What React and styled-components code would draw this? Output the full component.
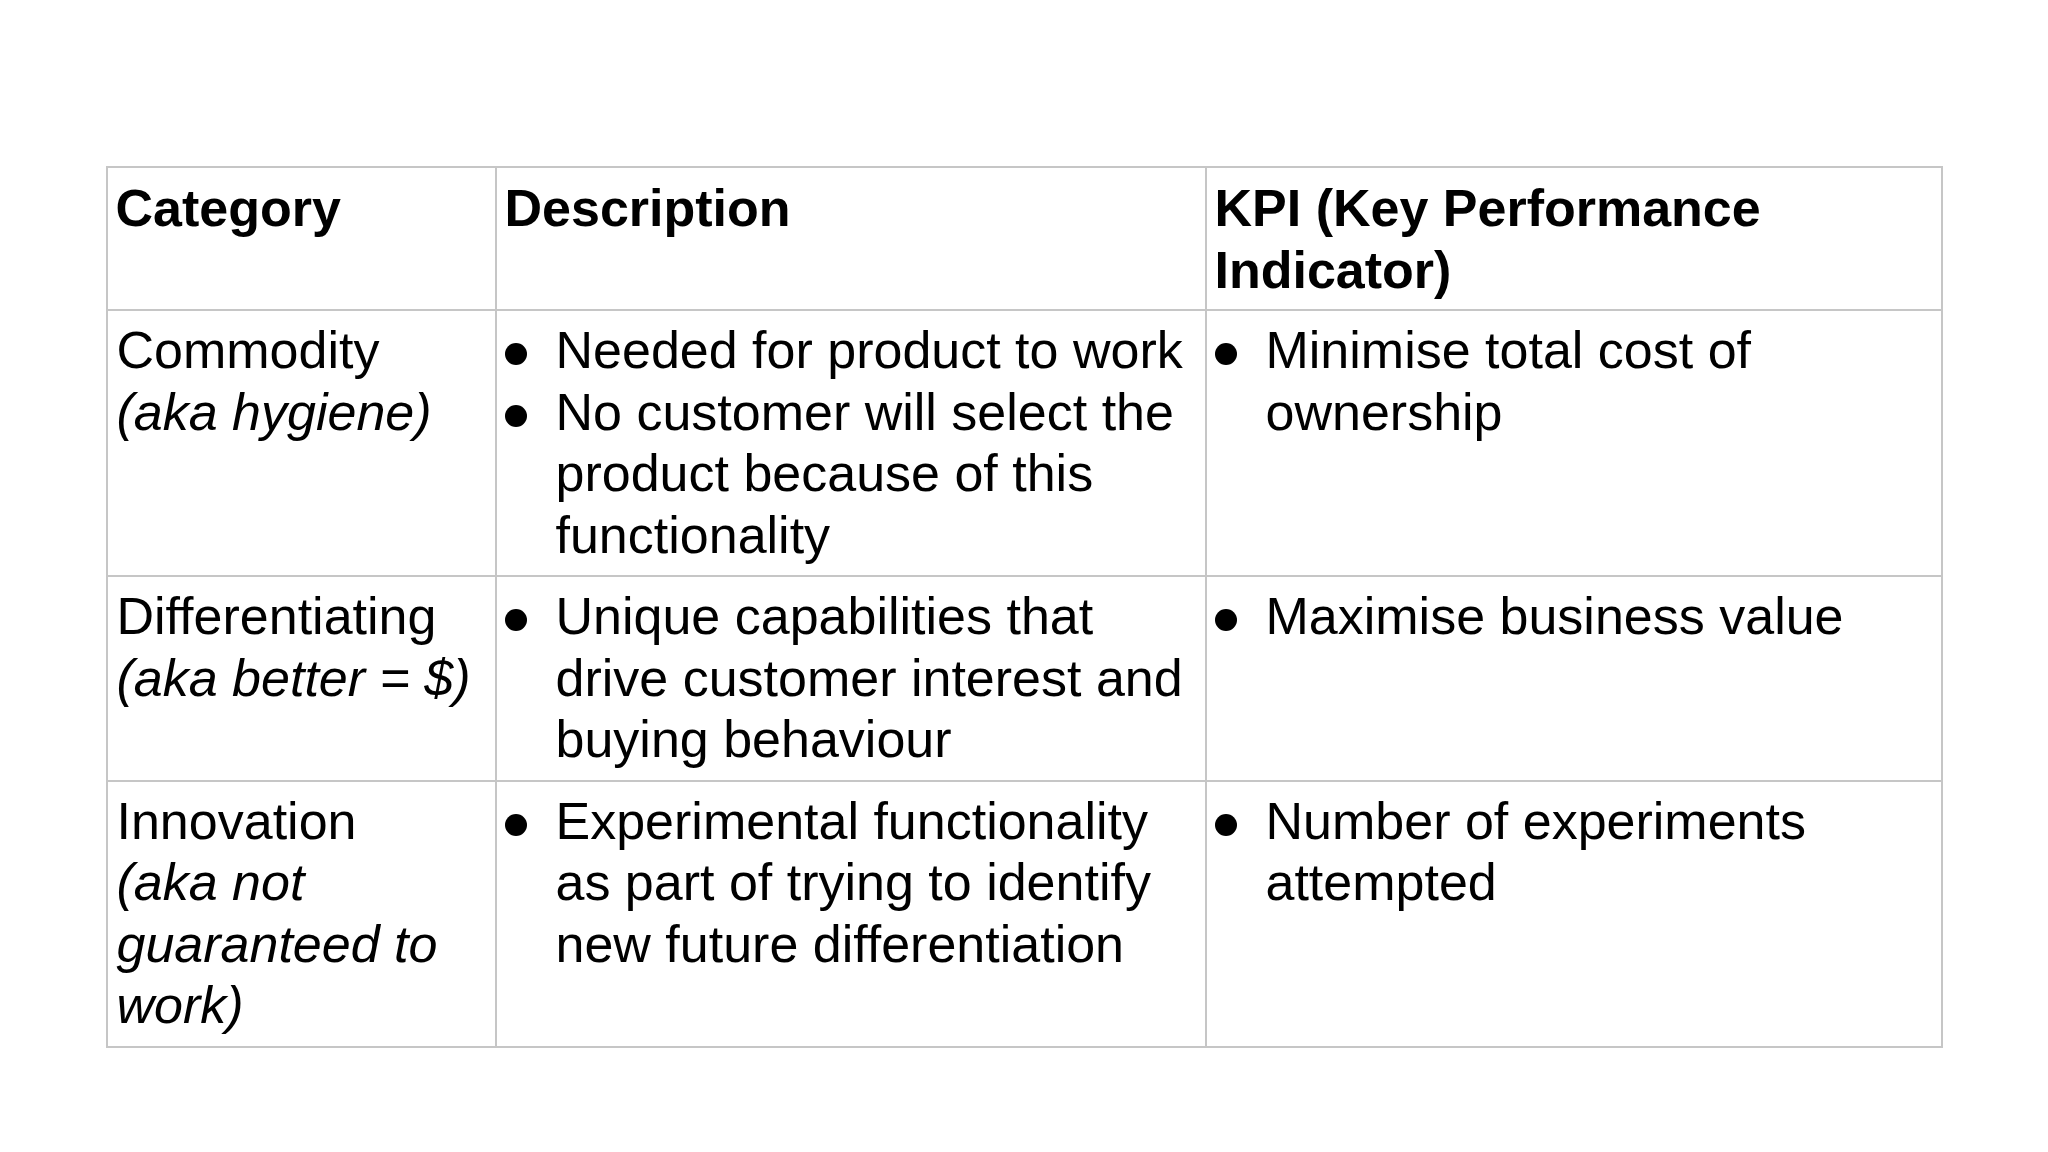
import React from "react";
import styled, { createGlobalStyle } from "styled-components";

const GlobalStyle = createGlobalStyle`
  html, body {
    margin: 0;
    padding: 0;
    background: #ffffff;
  }
  body {
    font-family: "Liberation Sans", Arial, Helvetica, sans-serif;
    color: #000000;
  }
`;

const rows = [
  {
    name: "Commodity",
    aka: "(aka hygiene)",
    description: [
      "Needed for product to work",
      "No customer will select the product because of this functionality",
    ],
    kpi: ["Minimise total cost of ownership"],
  },
  {
    name: "Differentiating",
    aka: "(aka better = $)",
    description: [
      "Unique capabilities that drive customer interest and buying behaviour",
    ],
    kpi: ["Maximise business value"],
  },
  {
    name: "Innovation",
    aka: "(aka not guaranteed to work)",
    description: [
      "Experimental functionality as part of trying to identify new future differentiation",
    ],
    kpi: ["Number of experiments attempted"],
  },
];

const App = () => {
  return (
    <>
      <GlobalStyle />
      <Slide>
        <Table>
          <colgroup>
            <col style={{ width: 389 }} />
            <col style={{ width: 710 }} />
            <col style={{ width: 736 }} />
          </colgroup>
          <thead>
            <tr>
              <HeadCell>Category</HeadCell>
              <HeadCell>Description</HeadCell>
              <HeadCell>KPI (Key Performance Indicator)</HeadCell>
            </tr>
          </thead>
          <tbody>
            {rows.map((row) => (
              <tr key={row.name}>
                <Cell>
                  <Name>{row.name}</Name>
                  <Aka>{row.aka}</Aka>
                </Cell>
                <Cell>
                  <BulletList>
                    {row.description.map((item) => (
                      <BulletItem key={item}>
                        <Marker />
                        <span>{item}</span>
                      </BulletItem>
                    ))}
                  </BulletList>
                </Cell>
                <Cell>
                  <BulletList>
                    {row.kpi.map((item) => (
                      <BulletItem key={item}>
                        <Marker />
                        <span>{item}</span>
                      </BulletItem>
                    ))}
                  </BulletList>
                </Cell>
              </tr>
            ))}
          </tbody>
        </Table>
      </Slide>
    </>
  );
};

export default App;

const Slide = styled.main`
  width: 2048px;
  height: 1152px;
  box-sizing: border-box;
  padding-top: 166px;
  display: flex;
  justify-content: center;
  align-items: flex-start;
  background: #ffffff;
`;

const Table = styled.table`
  width: 1835px;
  table-layout: fixed;
  border-collapse: collapse;
  font-size: 52px;
  line-height: 61.5px;
`;

const HeadCell = styled.th`
  border: 2px solid #c6c6c6;
  padding: 10px 10px 8px 8px;
  text-align: left;
  vertical-align: top;
  font-weight: 700;
`;

const Cell = styled.td`
  border: 2px solid #c6c6c6;
  padding: 9px 10px 9px 8px;
  vertical-align: top;
  font-weight: 400;

  &:first-child {
    padding-left: 9px;
  }
`;

const Name = styled.div``;

const Aka = styled.div`
  font-style: italic;
`;

const BulletList = styled.ul`
  list-style: none;
  margin: 0;
  padding: 0;
`;

const BulletItem = styled.li`
  display: flex;
  align-items: flex-start;
`;

const Marker = styled.span`
  flex: 0 0 51px;
  height: 61.5px;

  &::before {
    content: "";
    display: block;
    width: 22px;
    height: 22px;
    margin-top: 23px;
    border-radius: 50%;
    background: #000000;
  }
`;
